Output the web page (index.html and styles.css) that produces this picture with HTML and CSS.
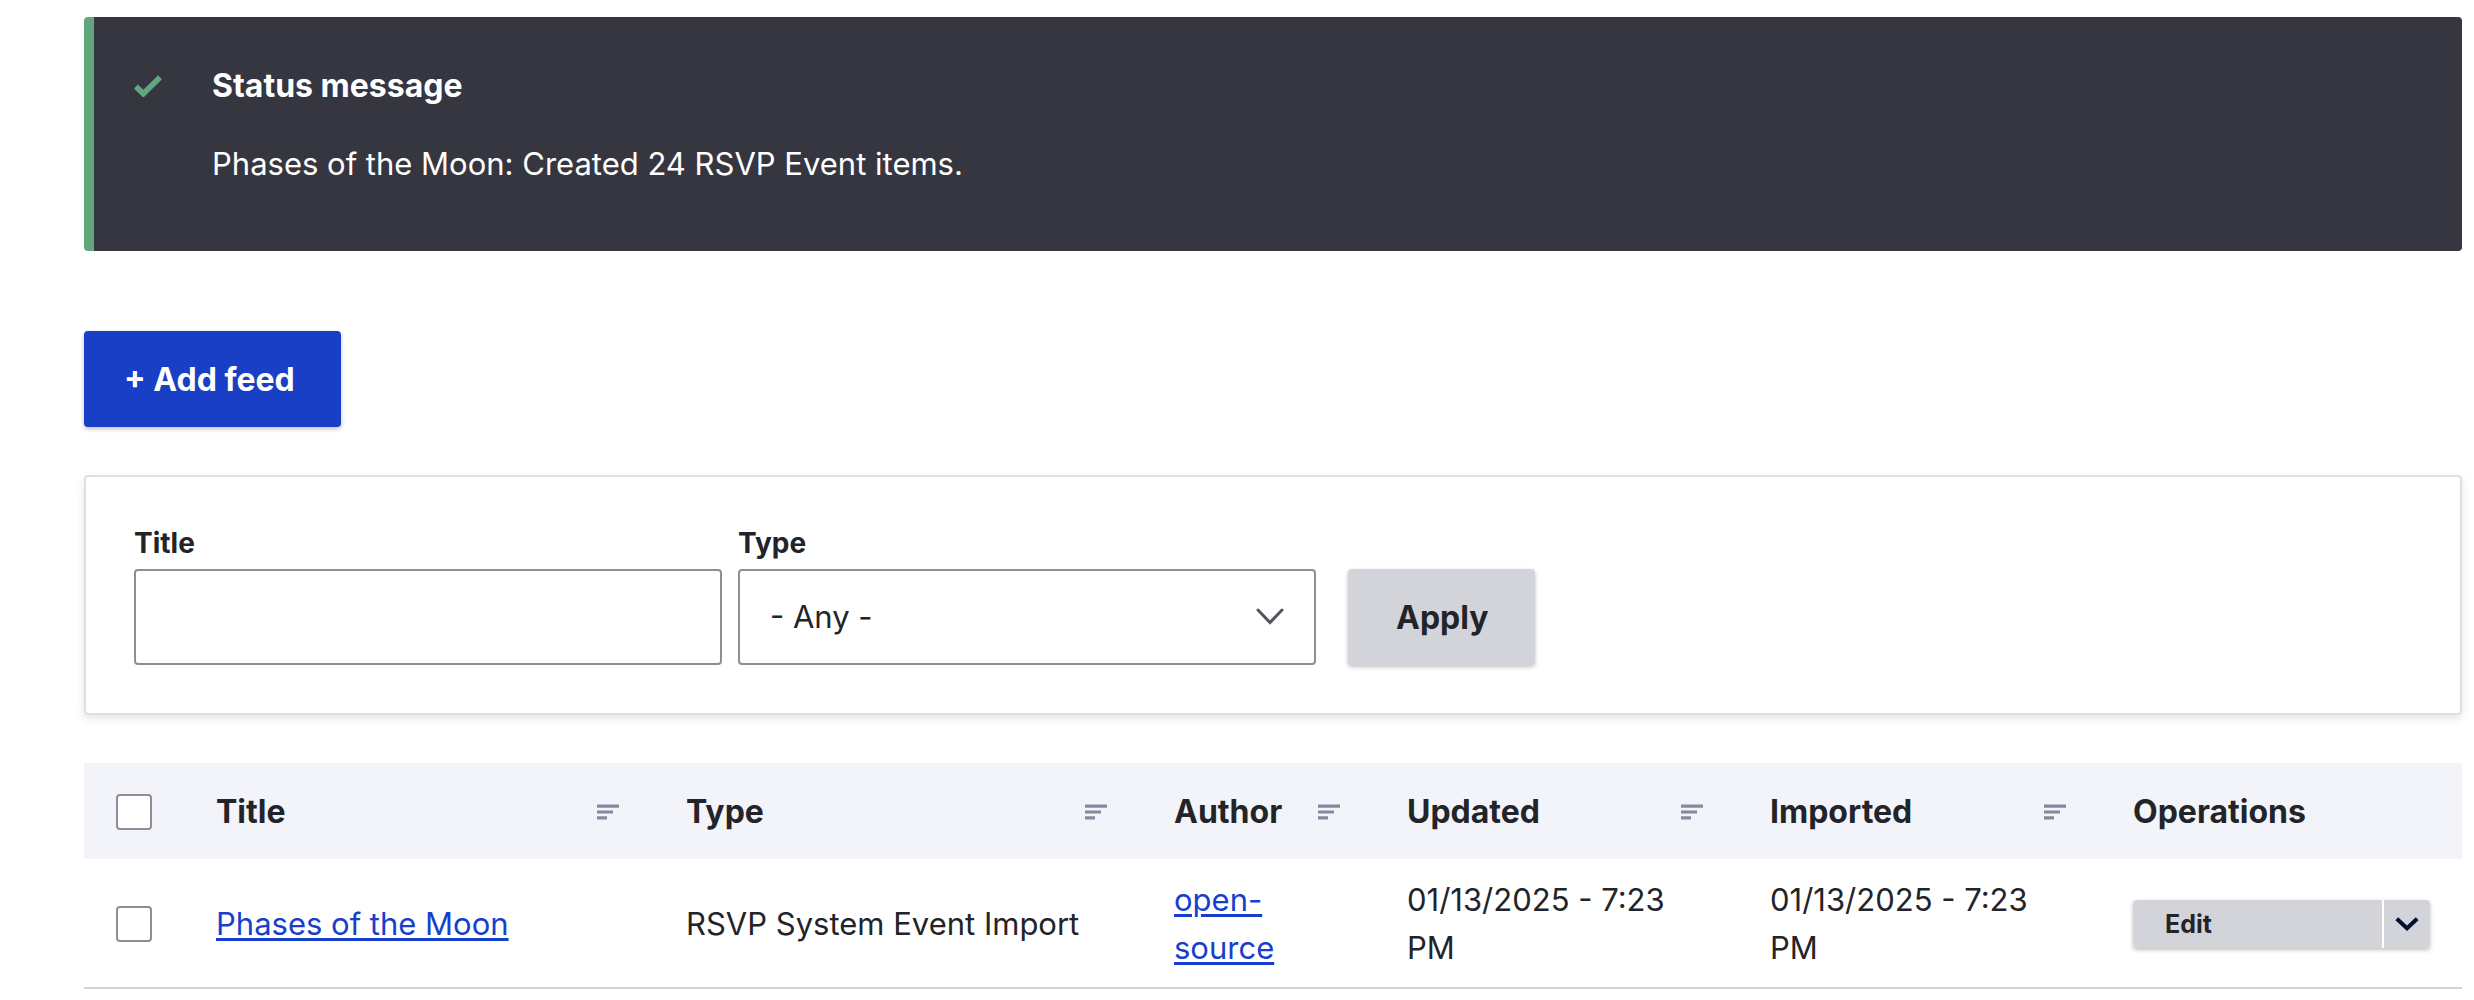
FILE: index.html
```html
<!DOCTYPE html>
<html lang="en">
<head>
<meta charset="utf-8">
<meta name="viewport" content="width=device-width, initial-scale=1">
<title>Feeds</title>
<link rel="stylesheet" href="styles.css">
</head>
<body>
<svg class="sprite" aria-hidden="true">
  <symbol id="sort" viewBox="0 0 22 16">
    <path d="M0 .5h22v3.2H0zM0 6.4h16v3.2H0zM0 12.3h10v3.2H0z" fill="currentColor"/>
  </symbol>
</svg>
<main class="page">
  <section class="message" role="status">
    <svg class="message-icon" viewBox="0 0 28 22" aria-hidden="true">
      <path d="M2 11.5l7.3 7.3L26 2.2" fill="none" stroke="currentColor" stroke-width="5.6"/>
    </svg>
    <div class="message-body">
      <h2 class="message-title">Status message</h2>
      <p class="message-text">Phases of the Moon: Created 24 RSVP Event items.</p>
    </div>
  </section>

  <a class="button button-primary" href="#add">+ Add feed</a>

  <form class="filters">
    <div class="field field-title">
      <label class="label" for="title">Title</label>
      <input class="control" id="title" type="text">
    </div>
    <div class="field field-type">
      <label class="label" for="type">Type</label>
      <select class="control select" id="type"><option>- Any -</option></select>
    </div>
    <button class="button" type="button">Apply</button>
  </form>

  <table class="feeds">
    <colgroup>
      <col class="col-check"><col class="col-title"><col><col class="col-author"><col class="col-date"><col class="col-date"><col class="col-ops">
    </colgroup>
    <thead>
      <tr>
        <th><input class="check" type="checkbox" aria-label="Select all rows"></th>
        <th><a class="sort" href="#title">Title <svg class="sort-icon"><use href="#sort"/></svg></a></th>
        <th><a class="sort" href="#type">Type <svg class="sort-icon"><use href="#sort"/></svg></a></th>
        <th><a class="sort" href="#author">Author <svg class="sort-icon"><use href="#sort"/></svg></a></th>
        <th><a class="sort" href="#updated">Updated <svg class="sort-icon"><use href="#sort"/></svg></a></th>
        <th><a class="sort" href="#imported">Imported <svg class="sort-icon"><use href="#sort"/></svg></a></th>
        <th>Operations</th>
      </tr>
    </thead>
    <tbody>
      <tr>
        <td><input class="check" type="checkbox" aria-label="Select Phases of the Moon"></td>
        <td><a class="link" href="#feed">Phases of the Moon</a></td>
        <td>RSVP System Event Import</td>
        <td><a class="link" href="#user">open-source</a></td>
        <td>01/13/2025 - 7:23 PM</td>
        <td>01/13/2025 - 7:23 PM</td>
        <td>
          <div class="dropbutton">
            <button class="dropbutton-action" type="button">Edit</button>
            <button class="dropbutton-toggle" type="button" aria-label="List additional actions">
              <svg class="toggle-icon" viewBox="0 0 24 14" aria-hidden="true"><path d="M1.8 1.8L12 11.2L22.2 1.8" fill="none" stroke="currentColor" stroke-width="4"/></svg>
            </button>
          </div>
        </td>
      </tr>
    </tbody>
  </table>
</main>
</body>
</html>
```
FILE: styles.css
```css
* { box-sizing: border-box; }

body {
  margin: 0;
  background: #fff;
  color: #232429;
  font: 31px/48px Inter, "Liberation Sans", sans-serif;
}

.sprite { display: none; }

.page { padding: 17px 12px 0 84px; }

.message {
  display: flex;
  gap: 50px;
  padding: 48px 48px 63px 40px;
  border-left: 10px solid #62a67d;
  border-radius: 4px;
  background: #363640;
  color: #fff;
}

.message-icon {
  width: 28px;
  height: 22px;
  margin-top: 10px;
  color: #62a67d;
}

.message-title {
  margin: 0 0 33px;
  font-size: 32px;
  font-weight: 700;
  line-height: 42px;
}

.message-text { margin: 0; }

.button {
  display: inline-block;
  padding: 2px 46px 0 48px;
  border: 0;
  border-radius: 4px;
  background: #d3d4d9;
  box-shadow: 0 2px 4px rgba(0, 0, 0, 0.25);
  color: #232429;
  font: 700 32px/94px Inter, "Liberation Sans", sans-serif;
  text-decoration: none;
}

.button-primary {
  margin: 80px 0 48px;
  padding: 2px 46px 0 40px;
  background: #183fc5;
  color: #fff;
  vertical-align: top;
}

.filters {
  display: flex;
  align-items: flex-end;
  padding: 48px;
  border: 2px solid #dedfe4;
  border-radius: 4px;
  box-shadow: 0 4px 10px rgba(0, 0, 0, 0.1);
}

.field { display: flex; flex-direction: column; }
.field-title { width: 588px; margin-right: 16px; }
.field-type { width: 578px; margin-right: 32px; }

.label {
  margin-bottom: 8px;
  font-size: 28px;
  font-weight: 700;
  line-height: 36px;
}

.control {
  width: 100%;
  height: 96px;
  padding: 0 30px;
  border: 2px solid #8e8f96;
  border-radius: 4px;
  background: #fff;
  color: inherit;
  font: inherit;
}

.select {
  appearance: none;
  background: #fff url("data:image/svg+xml,%3Csvg xmlns='http://www.w3.org/2000/svg' width='28' height='18'%3E%3Cpath d='M2 2l12 12.500L26 2' fill='none' stroke='%23545560' stroke-width='3' stroke-linecap='round'/%3E%3C/svg%3E") no-repeat right 30px center;
}

.feeds {
  width: 100%;
  margin-top: 48px;
  border-collapse: separate;
  border-spacing: 0;
  table-layout: fixed;
}

.col-check { width: 100px; }
.col-title { width: 470px; }
.col-author { width: 233px; }
.col-date { width: 363px; }
.col-ops { width: 361px; }

.feeds th {
  padding: 25px 32px 23px;
  background: #f3f4f9;
  font-size: 32px;
  font-weight: 700;
  text-align: left;
}

.feeds td {
  padding: 17px 32px 15px;
  border-bottom: 2px solid #d3d4d9;
}

.check {
  display: block;
  appearance: none;
  width: 36px;
  height: 36px;
  margin: 0;
  border: 2px solid #8e8f96;
  border-radius: 4px;
  background: #fff;
}

.sort {
  display: flex;
  align-items: center;
  justify-content: space-between;
  color: inherit;
  text-decoration: none;
}

.sort-icon {
  width: 22px;
  height: 16px;
  margin-right: 3px;
  color: #828a9f;
}

.link {
  color: #183fcb;
  text-decoration-thickness: 3px;
  text-underline-offset: 3px;
}

.dropbutton {
  display: flex;
  gap: 2px;
  height: 48px;
  border-radius: 4px;
  box-shadow: 0 2px 4px rgba(0, 0, 0, 0.25);
  background: #fff;
}

.dropbutton-action,
.dropbutton-toggle {
  border: 0;
  border-radius: 4px;
  background: #d3d4d9;
  color: #232429;
  font: 700 25px/48px Inter, "Liberation Sans", sans-serif;
}

.dropbutton-action {
  flex: 1;
  padding: 0 32px;
  border-radius: 4px 0 0 4px;
  text-align: left;
}

.dropbutton-toggle {
  display: flex;
  align-items: center;
  justify-content: center;
  width: 46px;
  padding: 0;
  border-radius: 0 4px 4px 0;
  color: #000f33;
}

.toggle-icon { width: 24px; height: 14px; }
```
